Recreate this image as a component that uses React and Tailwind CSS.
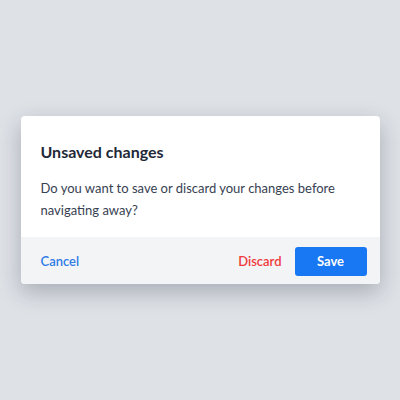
export default function App() {
  return (
    <div
      className="w-[400px] h-[400px] bg-[#dee1e6] flex items-center justify-center"
      style={{ fontFamily: "Lato, 'Noto Sans', sans-serif" }}
    >
      <div className="w-[359px] bg-white rounded-[4px] overflow-hidden shadow-[0_8px_22px_rgba(30,41,59,0.28)]">
        <div className="px-5 pt-[25px] pb-[16px]">
          <h2 className="text-[16px] leading-[22px] font-bold text-[#1f2937]">Unsaved changes</h2>
          <p className="mt-[14px] text-[13px] leading-[22px] text-[#374151]">
            Do you want to save or discard your changes before navigating away?
          </p>
        </div>
        <div className="bg-[#f3f4f6] h-[47px] pl-5 pr-[13px] pt-[2px] flex items-center justify-between">
          <button className="text-[13px] font-semibold text-[#2f7be6]">Cancel</button>
          <div className="flex items-center gap-[13px]">
            <button className="text-[13px] font-semibold text-[#ef3b3b]">Discard</button>
            <button className="w-[72px] h-[29px] rounded-[3px] bg-[#1877f2] text-white text-[13px] font-bold">
              Save
            </button>
          </div>
        </div>
      </div>
    </div>
  );
}
